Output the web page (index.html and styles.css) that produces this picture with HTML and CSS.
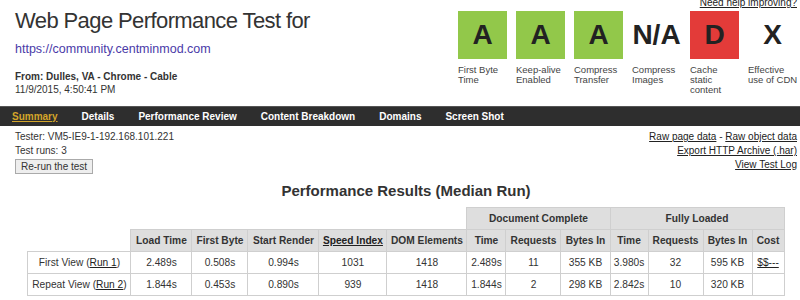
FILE: index.html
```html
<!DOCTYPE html>
<html lang="en">
<head>
    <meta charset="UTF-8">
    <title>Web Page Performance Test</title>
    <link rel="stylesheet" href="styles.css">
</head>
<body>

<div class="header">
    <div class="test-info">
        <h1 class="page-title">Web Page Performance Test for</h1>
        <a class="test-url" href="#">https://community.centminmod.com</a>
        <div class="test-meta">
            <strong>From: Dulles, VA - Chrome - Cable</strong><br>
            11/9/2015, 4:50:41 PM
        </div>
    </div>

    <div class="grades-block">
        <a class="help-link" href="#">Need help improving?</a>
        <div class="grades">
            <div class="grade">
                <div class="grade-box good">A</div>
                <div class="grade-label">First Byte<br>Time</div>
            </div>
            <div class="grade">
                <div class="grade-box good">A</div>
                <div class="grade-label">Keep-alive<br>Enabled</div>
            </div>
            <div class="grade">
                <div class="grade-box good">A</div>
                <div class="grade-label">Compress<br>Transfer</div>
            </div>
            <div class="grade">
                <div class="grade-box na">N/A</div>
                <div class="grade-label">Compress<br>Images</div>
            </div>
            <div class="grade">
                <div class="grade-box bad">D</div>
                <div class="grade-label">Cache<br>static<br>content</div>
            </div>
            <div class="grade">
                <div class="grade-box na">X</div>
                <div class="grade-label">Effective<br>use of CDN</div>
            </div>
        </div>
    </div>
</div>

<div class="nav-bar">
    <a class="nav-item active" href="#">Summary</a>
    <a class="nav-item" href="#">Details</a>
    <a class="nav-item" href="#">Performance Review</a>
    <a class="nav-item" href="#">Content Breakdown</a>
    <a class="nav-item" href="#">Domains</a>
    <a class="nav-item" href="#">Screen Shot</a>
</div>

<div class="run-info">
    <div class="tester">
        <div>Tester: VM5-IE9-1-192.168.101.221</div>
        <div>Test runs: 3</div>
        <button class="rerun-btn">Re-run the test</button>
    </div>
    <div class="raw-links">
        <div><a href="#">Raw page data</a> - <a href="#">Raw object data</a></div>
        <div><a href="#">Export HTTP Archive (.har)</a></div>
        <div><a href="#">View Test Log</a></div>
    </div>
</div>

<div class="results">
    <h2 class="results-title">Performance Results (Median Run)</h2>
    <table class="results-table">
        <colgroup>
            <col style="width:103px"><col style="width:61px"><col style="width:56px">
            <col style="width:71px"><col style="width:68px"><col style="width:80px">
            <col style="width:39px"><col style="width:55px"><col style="width:49px">
            <col style="width:38px"><col style="width:55px"><col style="width:49px">
            <col style="width:32px">
        </colgroup>
        <tr>
            <td class="blank" colspan="6"></td>
            <th colspan="3">Document Complete</th>
            <th colspan="4">Fully Loaded</th>
        </tr>
        <tr>
            <td class="blank"></td>
            <th>Load Time</th>
            <th>First Byte</th>
            <th>Start Render</th>
            <th><a href="#">Speed Index</a></th>
            <th>DOM Elements</th>
            <th>Time</th>
            <th>Requests</th>
            <th>Bytes In</th>
            <th>Time</th>
            <th>Requests</th>
            <th>Bytes In</th>
            <th>Cost</th>
        </tr>
        <tr>
            <td>First View (<a href="#">Run 1</a>)</td>
            <td>2.489s</td>
            <td>0.508s</td>
            <td>0.994s</td>
            <td>1031</td>
            <td>1418</td>
            <td>2.489s</td>
            <td>11</td>
            <td>355 KB</td>
            <td>3.980s</td>
            <td>32</td>
            <td>595 KB</td>
            <td><a href="#">$$---</a></td>
        </tr>
        <tr>
            <td>Repeat View (<a href="#">Run 2</a>)</td>
            <td>1.844s</td>
            <td>0.453s</td>
            <td>0.890s</td>
            <td>939</td>
            <td>1418</td>
            <td>1.844s</td>
            <td>2</td>
            <td>298 KB</td>
            <td>2.842s</td>
            <td>10</td>
            <td>320 KB</td>
            <td></td>
        </tr>
    </table>
</div>

</body>
</html>
```

FILE: styles.css
```css
/* Base */
body {
    margin: 0;
    font-family: "Liberation Sans", Arial, sans-serif;
    font-size: 10px;
    color: #333;
    background: #fff;
    overflow: hidden;
}

a {
    color: #222;
}

/* Header */
.header {
    display: flex;
    justify-content: space-between;
    align-items: flex-start;
    height: 96px;
}

.test-info {
    padding: 8px 0 0 15px;
}

.page-title {
    margin: 0;
    font-size: 22px;
    font-weight: normal;
    line-height: 26px;
    letter-spacing: -0.6px;
    color: #333;
}

.test-url {
    display: block;
    margin-top: 8px;
    font-size: 12.5px;
    line-height: 15px;
    color: #4a3aa8;
    text-decoration: none;
}

.test-meta {
    margin-top: 13px;
    line-height: 13px;
}

/* Grades */
.grades-block {
    padding-right: 3px;
}

.help-link {
    display: block;
    margin-top: -3px;
    line-height: 11px;
    text-align: right;
}

.grades {
    display: flex;
    gap: 9px;
    margin-top: 3px;
}

.grade {
    width: 49px;
}

.grade-box {
    height: 48px;
    line-height: 48px;
    text-align: center;
    font-size: 28px;
    font-weight: bold;
    color: #222;
}

.grade-box.good {
    background-color: #92c84a;
}

.grade-box.bad {
    background-color: #e33b39;
}

.grade-label {
    margin-top: 6px;
    font-size: 9.5px;
    line-height: 10px;
    white-space: nowrap;
    color: #444;
}

/* Navigation */
.nav-bar {
    display: flex;
    margin-top: 10px;
    height: 20px;
    background-color: #2e2e2e;
    border-top: 1px solid #555;
    box-sizing: border-box;
}

.nav-item {
    padding: 0 12px;
    line-height: 19px;
    font-weight: bold;
    color: #fff;
    text-decoration: none;
}

.nav-item.active {
    color: #d4a52a;
    text-decoration: underline;
}

/* Run info */
.run-info {
    display: flex;
    justify-content: space-between;
    padding: 4px 3px 0 15px;
    line-height: 14px;
}

.rerun-btn {
    display: block;
    margin-top: 1px;
    height: 15px;
    padding: 0 5px;
    font-family: inherit;
    font-size: 10px;
    line-height: 13px;
    color: #333;
    background-color: #eee;
    border: 1px solid #aaa;
}

.raw-links {
    text-align: right;
}

/* Results table */
.results {
    padding-left: 12px;
}

.results-title {
    margin: 8px 0 7px;
    font-size: 15px;
    line-height: 18px;
    text-align: center;
    color: #333;
}

.results-table {
    margin: 0 auto;
    width: 756px;
    table-layout: fixed;
    border-collapse: collapse;
    font-size: 10.2px;
}

.results-table th,
.results-table td {
    height: 21px;
    padding: 0;
    text-align: center;
    white-space: nowrap;
    border: 1px solid #cfcfcf;
}

.results-table th {
    background-color: #dedede;
    font-weight: bold;
}

.results-table td.blank {
    border: none;
}
```
